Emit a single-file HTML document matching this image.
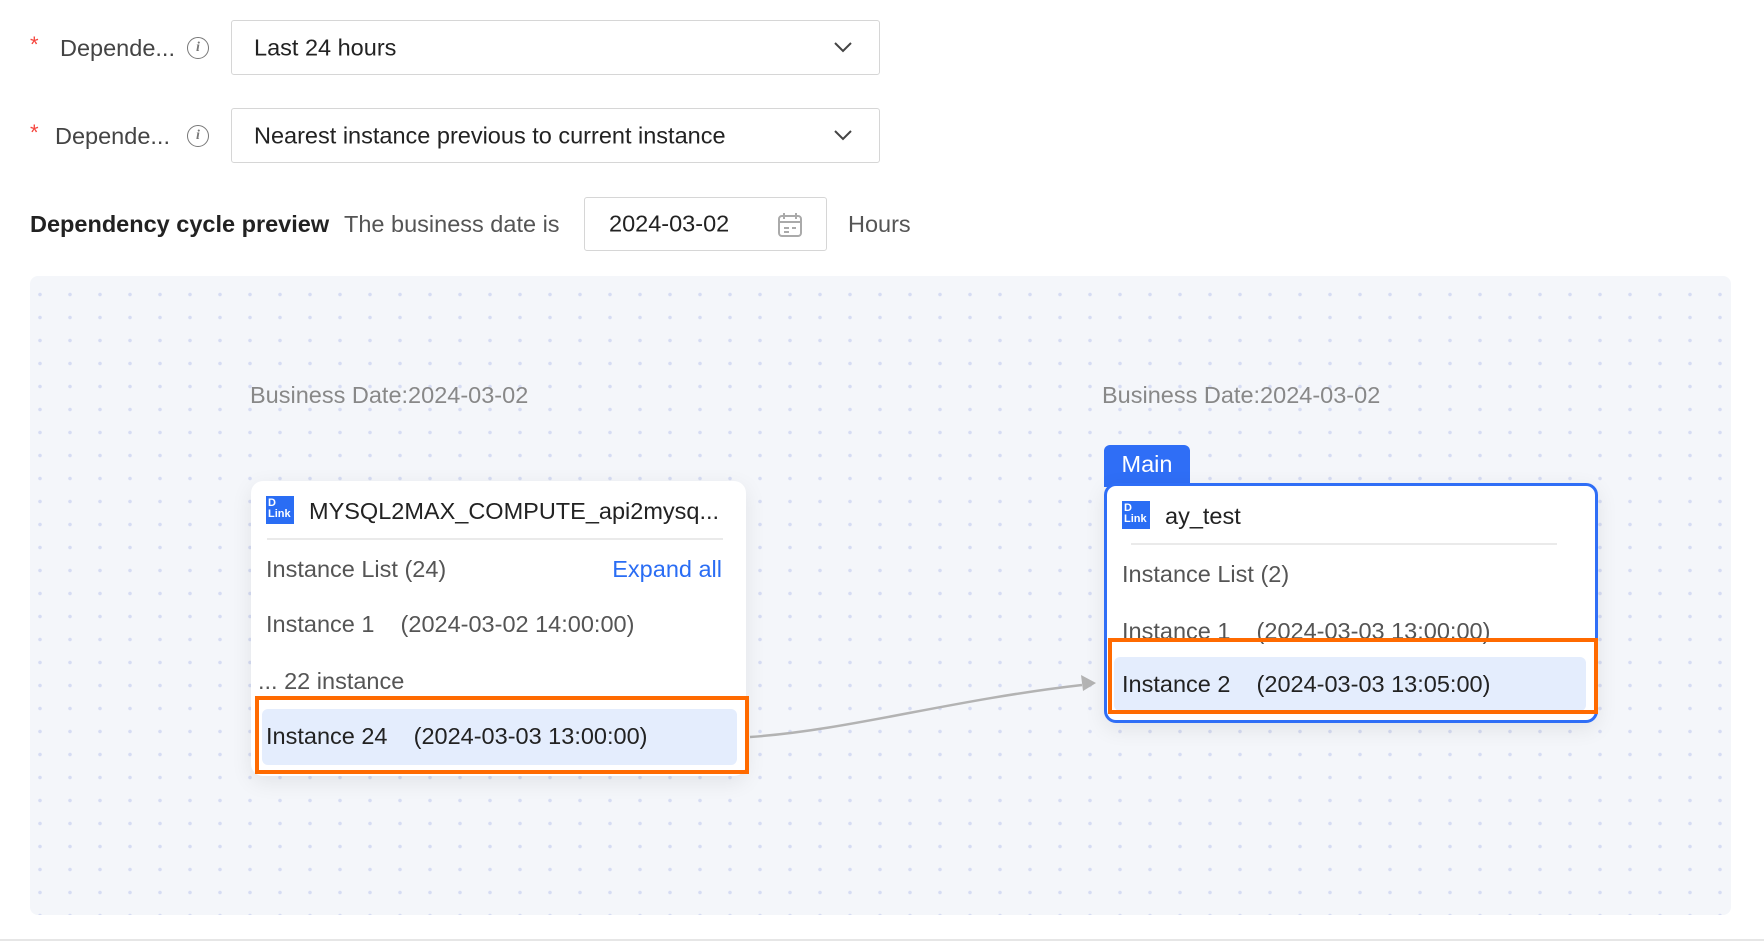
<!DOCTYPE html>
<html><head><meta charset="utf-8"><style>
*{box-sizing:border-box;margin:0;padding:0}
body{width:1764px;height:946px;background:#fff;font-family:"Liberation Sans",sans-serif;color:#333;position:relative;overflow:hidden}
.abs{position:absolute}
.lbl{font-size:23.5px;color:#444;line-height:26px}
.star{color:#f5453d;font-size:22px}
.sel{border:1.5px solid #d6d6d6;border-radius:3px;background:#fff}
.sel span{position:absolute;left:22px;top:50%;transform:translateY(-50%);font-size:23.5px;color:#222}
.info{width:22px;height:22px;border:1.8px solid #777;border-radius:50%;font-size:14px;color:#777;text-align:center;line-height:19px;font-family:"Liberation Serif",serif;font-style:italic;font-weight:bold}
.canvas{left:30px;top:276px;width:1701px;height:639px;border-radius:8px;background-color:#f4f6fa;background-image:radial-gradient(circle,#d6dcf3 1.6px,transparent 2px);background-size:30px 23px;background-position:-5px -16px}
.card{background:#fff;border-radius:12px;box-shadow:0 6px 22px rgba(0,0,0,.08)}
.t{position:absolute;font-size:23.5px;white-space:pre;line-height:26px}
.ic{position:absolute;width:28px;height:28px;background:#2a6df4;color:#fff;font-size:11px;line-height:11px;font-weight:bold;padding:2px 0 0 2px}
.hl{position:absolute;background:#e4edfd;border-radius:6px}
.ob{position:absolute;border:4px solid #ff6a00}
</style></head><body>
<div class="abs star" style="left:30px;top:32px">*</div>
<div class="abs lbl" style="left:60px;top:35px">Depende...</div>
<div class="abs info" style="left:187px;top:37px">i</div>
<div class="abs sel" style="left:231px;top:20px;width:649px;height:55px"><span>Last 24 hours</span>
<svg class="abs" style="right:26px;top:19px" width="20" height="14" viewBox="0 0 20 14"><path d="M2 3l8 8 8-8" fill="none" stroke="#444" stroke-width="2"/></svg></div>
<div class="abs star" style="left:30px;top:120px">*</div>
<div class="abs lbl" style="left:55px;top:123px">Depende...</div>
<div class="abs info" style="left:187px;top:125px">i</div>
<div class="abs sel" style="left:231px;top:108px;width:649px;height:55px"><span>Nearest instance previous to current instance</span>
<svg class="abs" style="right:26px;top:19px" width="20" height="14" viewBox="0 0 20 14"><path d="M2 3l8 8 8-8" fill="none" stroke="#444" stroke-width="2"/></svg></div>
<div class="abs" style="left:30px;top:211px;font-size:23.5px;font-weight:bold;color:#222">Dependency cycle preview</div>
<div class="abs lbl" style="left:344px;top:211px;color:#555">The business date is</div>
<div class="abs sel" style="left:584px;top:197px;width:243px;height:54px"><span style="left:24px">2024-03-02</span>
<svg class="abs" style="left:192px;top:13px" width="26" height="28" viewBox="0 0 26 28"><rect x="2" y="5" width="22" height="20" rx="3" fill="none" stroke="#aaa" stroke-width="2"/><path d="M7 2v6M19 2v6M2 11h22M7 17h5M7 21h5M15 17h4" stroke="#aaa" stroke-width="2"/></svg></div>
<div class="abs lbl" style="left:848px;top:211px;color:#555">Hours</div>
<div class="abs canvas"></div>
<div class="abs" style="left:0;top:939px;width:1764px;height:2px;background:#e6e6e6"></div>
<div class="t" style="left:250px;top:382px;color:#888">Business Date:2024-03-02</div>
<div class="t" style="left:1102px;top:382px;color:#888">Business Date:2024-03-02</div>
<svg class="abs" style="left:0;top:0" width="1764" height="946"><path d="M750 737 C 850 730, 950 700, 1082 685" fill="none" stroke="#b3b3b3" stroke-width="2.5"/><path d="M1096 683 l-15 -8 l2 16z" fill="#b3b3b3"/></svg>
<div class="abs card" style="left:251px;top:481px;width:495px;height:295px">
<div class="ic" style="left:15px;top:15px">D<br>Link</div>
<div class="t" style="left:58px;top:17px;color:#222">MYSQL2MAX_COMPUTE_api2mysq...</div>
<div class="abs" style="left:16px;top:57px;width:456px;height:1.5px;background:#eaeaea"></div>
<div class="t" style="left:15px;top:75px;color:#555">Instance List (24)</div>
<div class="t" style="right:24px;top:75px;color:#2a6df4">Expand all</div>
<div class="t" style="left:15px;top:130px;color:#555">Instance 1    (2024-03-02 14:00:00)</div>
<div class="t" style="left:7px;top:187px;color:#555">... 22 instance</div>
<div class="hl" style="left:11px;top:228px;width:475px;height:56px"></div>
<div class="t" style="left:15px;top:242px;color:#222">Instance 24    (2024-03-03 13:00:00)</div>
</div>
<div class="ob" style="left:255px;top:696px;width:494px;height:78px"></div>
<div class="abs" style="left:1104px;top:445px;width:86px;height:42px;background:#2f6ef6;border-radius:6px 6px 0 0;color:#fff;font-size:23.5px;text-align:center;line-height:38px">Main</div>
<div class="abs card" style="left:1104px;top:483px;width:494px;height:240px;border:3.5px solid #2f6ef6;border-radius:12px">
<div class="ic" style="left:15px;top:15px">D<br>Link</div>
<div class="t" style="left:58px;top:17px;color:#222">ay_test</div>
<div class="abs" style="left:24px;top:57px;width:426px;height:1.5px;background:#eaeaea"></div>
<div class="t" style="left:15px;top:75px;color:#555">Instance List (2)</div>
<div class="t" style="left:15px;top:132px;color:#555">Instance 1    (2024-03-03 13:00:00)</div>
<div class="hl" style="left:7px;top:171px;width:472px;height:54px"></div>
<div class="t" style="left:15px;top:185px;color:#222">Instance 2    (2024-03-03 13:05:00)</div>
</div>
<div class="ob" style="left:1108px;top:638px;width:490px;height:76px"></div>
</body></html>
